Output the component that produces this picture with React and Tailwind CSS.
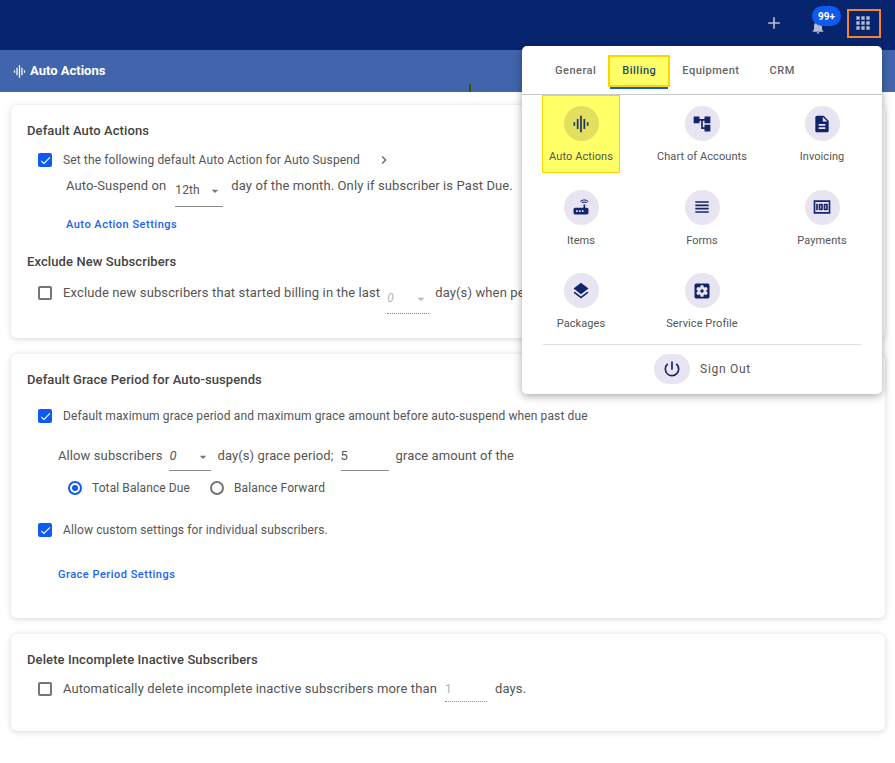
import {
  MdAdd, MdNotifications, MdApps, MdGraphicEq, MdAccountTree, MdDescription, MdRouter,
  MdViewHeadline, MdMoney, MdLayers, MdSettingsApplications, MdPowerSettingsNew,
  MdChevronRight, MdArrowDropDown, MdCheck,
} from 'react-icons/md';

const menuItems = [
  { label: 'Auto Actions', icon: MdGraphicEq, active: true },
  { label: 'Chart of Accounts', icon: MdAccountTree },
  { label: 'Invoicing', icon: MdDescription },
  { label: 'Items', icon: MdRouter },
  { label: 'Forms', icon: MdViewHeadline },
  { label: 'Payments', icon: MdMoney },
  { label: 'Packages', icon: MdLayers },
  { label: 'Service Profile', icon: MdSettingsApplications },
];

function Checkbox({ checked, className = '' }) {
  if (checked) {
    return (
      <span className={`flex h-[14px] w-[14px] shrink-0 items-center justify-center rounded-[2px] bg-[#0f5bf0] text-white ${className}`}>
        <MdCheck size={13} />
      </span>
    );
  }
  return <span className={`h-[14px] w-[14px] shrink-0 rounded-[2px] border-2 border-[#757575] ${className}`} />;
}

function Radio({ checked, className = '' }) {
  return (
    <span className={`flex h-[14px] w-[14px] shrink-0 items-center justify-center rounded-full border-2 ${checked ? 'border-[#0f5bf0]' : 'border-[#757575]'} ${className}`}>
      {checked && <span className="h-[6px] w-[6px] rounded-full bg-[#0f5bf0]" />}
    </span>
  );
}

function Select({ value, italic, disabled, className = '' }) {
  return (
    <span className={`flex shrink-0 items-start justify-between ${disabled ? 'border-b border-dotted border-[#8a8a8a] text-[#b5b5b5]' : 'border-b border-[#8d8d8d] text-[#555]'} ${className}`}>
      <span className={italic ? 'italic' : ''}>{value}</span>
      <MdArrowDropDown size={16} className={`mt-[1px] ${disabled ? 'text-[#b5b5b5]' : 'text-[#777]'}`} />
    </span>
  );
}

function Card({ className = '', children }) {
  return (
    <div className={`rounded-[6px] bg-white pl-4 shadow-[0_1px_6px_rgba(0,0,0,0.16)] ${className}`}>
      {children}
    </div>
  );
}

function Title({ children }) {
  return <div className="text-[13px] font-medium leading-[16px] tracking-[0.1px] text-[#444]">{children}</div>;
}

function MenuItem({ label, icon: Icon, active }) {
  return (
    <div className={`box-border flex h-[78px] w-[78px] flex-col items-center border pt-[10px] ${active ? 'border-[#ffd400] bg-[#ffff66]' : 'border-transparent'}`}>
      <span className={`flex h-[35px] w-[35px] items-center justify-center rounded-full ${active ? 'bg-[#e3df5e]' : 'bg-[#e8e4f2]'}`}>
        <Icon size={20} className={active ? 'text-[#17305f]' : 'text-[#14246b]'} />
      </span>
      <span className="mt-[9px] whitespace-nowrap text-[11px] leading-[14px] tracking-[0.08px] text-[#555]">{label}</span>
    </div>
  );
}

function AppMenu() {
  return (
    <div className="absolute left-[522px] top-[46px] h-[348px] w-[360px] rounded-[5px] bg-white shadow-[0_2px_8px_rgba(0,0,0,0.35)]">
      <div className="flex h-[49px] items-start border-b border-[#c9c9c9] pl-[33px] text-[11px] font-medium tracking-[0.5px] text-[#666]">
        <span className="mt-[18px] leading-[14px]">General</span>
        <span className="relative ml-[12px] mt-[9px] flex h-[32px] w-[62px] items-center justify-center border-2 border-[#ffd400] bg-[#ffff66] text-[#1d4a6b]">
          Billing
          <span className="absolute -bottom-[4px] left-0 h-[2px] w-[58px] bg-[#0f5bf0]" />
        </span>
        <span className="ml-[12px] mt-[18px] leading-[14px]">Equipment</span>
        <span className="ml-[30px] mt-[18px] leading-[14px]">CRM</span>
      </div>
      <div className="grid grid-cols-[121px_120px_78px] gap-y-[5.5px] pl-[20px]">
        {menuItems.map((item) => (
          <MenuItem key={item.label} {...item} />
        ))}
      </div>
      <div className="mx-[21px] mt-[4px] flex items-center justify-center gap-[10px] border-t border-[#e0e0e0] pl-[1px] pt-[9px]">
        <span className="flex h-[30px] w-[36px] items-center justify-center rounded-full bg-[#e8e4f2] text-[#14246b]">
          <MdPowerSettingsNew size={20} />
        </span>
        <span className="text-[12px] tracking-[0.7px] text-[#555]">Sign Out</span>
      </div>
    </div>
  );
}

export default function App() {
  return (
    <div className="relative h-[763px] w-[895px] overflow-hidden bg-white [font-family:Roboto,sans-serif] text-[12px] tracking-[0.12px] text-[#555]">
      <header className="flex h-[50px] items-center justify-end bg-[#07246f] pb-[4px]">
        <MdAdd size={20} className="mr-[25px] text-[#b8bdcc]" />
        <span className="relative mr-[20px] flex h-[18px] w-[18px] items-center justify-center">
          <MdNotifications size={16} className="mt-[8px] text-[#b8bdcc]" />
          <span className="absolute -top-[8px] left-[3px] flex h-[20px] w-[29px] items-center justify-center rounded-full bg-[#0f5bf0] text-[10px] font-bold tracking-normal text-white">99+</span>
        </span>
        <span className="mr-[14px] flex h-[29px] w-[34px] items-center justify-center border-2 border-[#f5832a] pr-[2px]">
          <MdApps size={20} className="text-[#b8bdcc]" />
        </span>
      </header>

      <div className="relative flex h-[42px] items-center bg-[#4165ac] pl-[12px] text-white">
        <MdGraphicEq size={15} />
        <span className="ml-[3px] text-[13px] font-bold tracking-normal">Auto Actions</span>
        <span className="absolute bottom-0 left-[469px] h-[8px] w-[2px] bg-[#3f5200]" />
      </div>

      <div className="flex flex-col gap-4 pl-[11px] pr-[10px] pt-[13px]">
        <Card className="h-[233px] pt-[18px]">
          <Title>Default Auto Actions</Title>
          <div className="ml-[11px] mt-[13px] flex items-center leading-[16px]">
            <Checkbox checked />
            <span className="ml-[11px]">Set the following default Auto Action for Auto Suspend</span>
            <MdChevronRight size={16} className="ml-[16px] text-[#666]" />
          </div>
          <div className="ml-[39px] mt-[10px] flex items-start text-[13px] leading-[16px] tracking-[0.1px]">
            <span>Auto-Suspend on</span>
            <Select value="12th" className="ml-[9px] mt-[4px] h-[25px] w-[48px] text-[12px]" />
            <span className="ml-2">day of the month. Only if subscriber is Past Due.</span>
          </div>
          <div className="ml-[39px] mt-[11px] text-[11px] font-medium leading-[14px] tracking-[0.5px] text-[#1a63f0]">Auto Action Settings</div>
          <div className="mt-[22px]"><Title>Exclude New Subscribers</Title></div>
          <div className="ml-[11px] mt-[15px] flex items-start text-[13px] leading-[16px] tracking-[0.12px]">
            <Checkbox className="mt-[1px]" />
            <span className="ml-[11px] whitespace-nowrap">Exclude new subscribers that started billing in the last</span>
            <Select value="0" italic disabled className="ml-[7px] mt-[5px] h-[24px] w-[42px] text-[12px]" />
            <span className="ml-[6px] whitespace-nowrap">day(s) when performing auto-suspend</span>
          </div>
        </Card>

        <Card className="h-[264px] pt-[18px]">
          <Title>Default Grace Period for Auto-suspends</Title>
          <div className="ml-[11px] mt-[20px] flex items-center leading-[16px]">
            <Checkbox checked />
            <span className="ml-[11px]">Default maximum grace period and maximum grace amount before auto-suspend when past due</span>
          </div>
          <div className="ml-[31px] mt-[24px] flex items-start text-[13px] leading-[16px] tracking-[0.1px]">
            <span>Allow subscribers</span>
            <Select value="0" italic className="ml-[7px] h-[23px] w-[42px]" />
            <span className="ml-[6px]">day(s) grace period;</span>
            <span className="ml-[7px] h-[23px] w-[48px] border-b border-[#8d8d8d]">5</span>
            <span className="ml-[7px]">grace amount of the</span>
          </div>
          <div className="ml-[41px] mt-[9px] flex items-center leading-[16px] tracking-[0.1px]">
            <Radio checked />
            <span className="ml-[10px]">Total Balance Due</span>
            <Radio className="ml-[20px]" />
            <span className="ml-[10px]">Balance Forward</span>
          </div>
          <div className="ml-[11px] mt-[26px] flex items-center leading-[16px]">
            <Checkbox checked />
            <span className="ml-[11px]">Allow custom settings for individual subscribers.</span>
          </div>
          <div className="ml-[31px] mt-[30px] text-[11px] font-medium leading-[14px] tracking-[0.5px] text-[#1a63f0]">Grace Period Settings</div>
        </Card>

        <Card className="h-[97px] pt-[18px]">
          <Title>Delete Incomplete Inactive Subscribers</Title>
          <div className="ml-[11px] mt-[13px] flex items-start text-[13px] leading-[16px] tracking-[0.12px]">
            <Checkbox className="mt-[1px]" />
            <span className="ml-[11px]">Automatically delete incomplete inactive subscribers more than</span>
            <span className="ml-2 h-[21px] w-[42px] border-b border-dotted border-[#8a8a8a] text-[12px] text-[#b5b5b5]">1</span>
            <span className="ml-2">days.</span>
          </div>
        </Card>
      </div>

      <AppMenu />
    </div>
  );
}
